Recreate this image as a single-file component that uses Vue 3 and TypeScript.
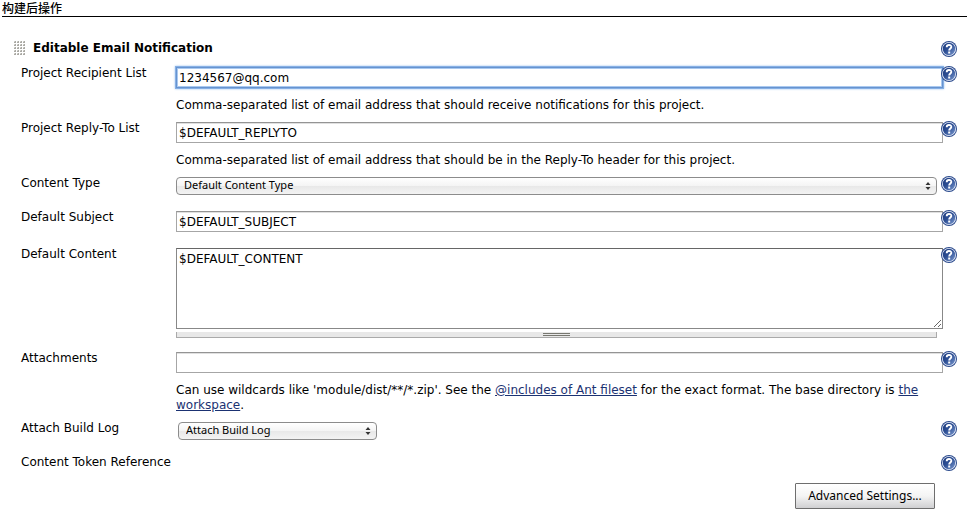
<script setup lang="ts">
import { ref } from 'vue'

const recipients = ref('1234567@qq.com')
const replyTo = ref('$DEFAULT_REPLYTO')
const contentType = ref('default')
const subject = ref('$DEFAULT_SUBJECT')
const content = ref('$DEFAULT_CONTENT')
const attachments = ref('')
const attachLog = ref('attach')
</script>

<template>
  <svg class="sprites" aria-hidden="true">
    <defs>
      <linearGradient id="disc" x1="0" y1="0" x2="1" y2="1">
        <stop offset="0" stop-color="#1d3a7c" />
        <stop offset="0.45" stop-color="#2c4e94" />
        <stop offset="1" stop-color="#7d9bd0" />
      </linearGradient>
    </defs>
    <symbol id="help" viewBox="0 0 16 16">
      <circle cx="8" cy="8" r="8" fill="#2b4a8c" />
      <circle cx="8" cy="8" r="7" fill="#e8eefa" />
      <circle cx="8" cy="8" r="6.2" fill="url(#disc)" />
      <path d="M5.7 6.2C5.7 3.2 10.4 3.3 10.3 5.9C10.2 7.5 8.2 7.6 8.2 9.5" fill="none" stroke="#fff" stroke-width="1.9" />
      <rect x="7.2" y="10.5" width="2" height="2" fill="#fff" />
    </symbol>
    <symbol id="arrows" viewBox="0 0 6 8">
      <path d="M3 0L5.5 3H0.5ZM3 8L0.5 5H5.5Z" fill="#333" />
    </symbol>
    <symbol id="dot" viewBox="0 0 2 2">
      <rect width="2" height="2" fill="#d2d2cc" />
      <path d="M1 0H2V2H0V1H1Z" fill="#aaa9a4" />
    </symbol>
  </svg>

  <form class="config" @submit.prevent>
    <h2 class="section">构建后操作</h2>

    <div class="head">
      <svg class="grip" viewBox="0 0 12 15" shape-rendering="crispEdges" aria-hidden="true">
        <template v-for="r in 5" :key="r">
          <use v-for="c in 4" :key="c" href="#dot" :x="c * 3 - 3" :y="r * 3 - 3" width="2" height="2" />
        </template>
      </svg>
      <h3>Editable Email Notification</h3>
      <button type="button" class="help" aria-label="Help"><svg><use href="#help" /></svg></button>
    </div>

    <div class="row">
      <label for="recipients">Project Recipient List</label>
      <div class="field">
        <input id="recipients" v-model="recipients" class="text active" type="text" />
        <p>Comma-separated list of email address that should receive notifications for this project.</p>
      </div>
      <button type="button" class="help" aria-label="Help"><svg><use href="#help" /></svg></button>
    </div>

    <div class="row">
      <label for="reply">Project Reply-To List</label>
      <div class="field">
        <input id="reply" v-model="replyTo" class="text" type="text" />
        <p>Comma-separated list of email address that should be in the Reply-To header for this project.</p>
      </div>
      <button type="button" class="help" aria-label="Help"><svg><use href="#help" /></svg></button>
    </div>

    <div class="row spaced">
      <label for="type">Content Type</label>
      <div class="field">
        <div class="picker">
          <select id="type" v-model="contentType"><option value="default">Default Content Type</option></select>
          <svg class="arrows"><use href="#arrows" /></svg>
        </div>
      </div>
      <button type="button" class="help" aria-label="Help"><svg><use href="#help" /></svg></button>
    </div>

    <div class="row spaced">
      <label for="subject">Default Subject</label>
      <div class="field">
        <input id="subject" v-model="subject" class="text" type="text" />
      </div>
      <button type="button" class="help" aria-label="Help"><svg><use href="#help" /></svg></button>
    </div>

    <div class="row content-row">
      <label for="content">Default Content</label>
      <div class="field">
        <textarea id="content" v-model="content"></textarea>
        <div class="sizer"><span></span></div>
      </div>
      <button type="button" class="help" aria-label="Help"><svg><use href="#help" /></svg></button>
    </div>

    <div class="row">
      <label for="attachments">Attachments</label>
      <div class="field">
        <input id="attachments" v-model="attachments" class="text" type="text" />
        <p>
          Can use wildcards like 'module/dist/**/*.zip'. See the <a href="#">@includes of Ant fileset</a> for the exact
          format. The base directory is <a href="#">the workspace</a>.
        </p>
      </div>
      <button type="button" class="help" aria-label="Help"><svg><use href="#help" /></svg></button>
    </div>

    <div class="row spaced">
      <label for="log">Attach Build Log</label>
      <div class="field">
        <div class="picker short">
          <select id="log" v-model="attachLog"><option value="attach">Attach Build Log</option></select>
          <svg class="arrows"><use href="#arrows" /></svg>
        </div>
      </div>
      <button type="button" class="help" aria-label="Help"><svg><use href="#help" /></svg></button>
    </div>

    <div class="row token-row">
      <span class="label">Content Token Reference</span>
      <div class="field"></div>
      <button type="button" class="help" aria-label="Help"><svg><use href="#help" /></svg></button>
    </div>

    <div class="actions">
      <button type="button" class="advanced">Advanced Settings...</button>
    </div>
  </form>
</template>

<style>
body {
  background: #fff;
}
</style>

<style scoped>
.sprites {
  position: absolute;
  width: 0;
  height: 0;
}

.config {
  color: #000;
  font: 12px/15px Verdana, "DejaVu Sans", "Noto Sans CJK SC", sans-serif;
}

.section {
  margin: 0 0 24px 2px;
  border-bottom: 1px solid #000;
  font: 500 12px/16px "Noto Sans CJK SC", sans-serif;
}

.head {
  display: flex;
  align-items: flex-start;
  padding: 0 10px 9px 14px;
}

.grip {
  width: 12px;
  height: 15px;
  margin-right: 7px;
}

h3 {
  flex: 1;
  margin: 0;
  font-size: 12px;
  font-weight: bold;
}

.row {
  display: grid;
  grid-template-columns: 155px minmax(0, 1fr) 16px;
  align-items: start;
  padding: 0 10px 8px 21px;
}

.spaced {
  padding-bottom: 15px;
}

.content-row {
  padding-bottom: 13px;
}

.token-row {
  padding-bottom: 12px;
}

.field {
  margin-right: 4px;
  padding-top: 1px;
}

.help {
  position: relative;
  width: 16px;
  height: 16px;
  padding: 0;
  border: 0;
  background: none;
}

.help svg {
  display: block;
  width: 16px;
  height: 16px;
}

.text,
textarea {
  display: block;
  box-sizing: border-box;
  width: calc(100% + 6px);
  margin: 0;
  padding: 2px;
  border: 1px solid #a6a6a6;
  border-radius: 0;
  outline: 0;
  background: #fff;
  color: #000;
  font: inherit;
}

.text {
  height: 21px;
  border-top-color: #949494;
  box-shadow: inset 0 1px #e0e0e0;
}

.active {
  border-color: #6793cf;
  box-shadow: 0 0 0 1px #86b0e5, 0 0 2px 1px #9cc2ef, inset 0 0 0 1px #a9c9f0;
}

textarea {
  height: 81px;
  padding-top: 3px;
  border-color: #666 #888 #888;
  resize: both;
}

p {
  margin: 10px 0 0;
}

a {
  color: #1b3272;
}

.picker {
  position: relative;
}

.short {
  width: 199px;
  margin-left: 2px;
}

select {
  display: block;
  box-sizing: border-box;
  width: 100%;
  height: 18px;
  padding: 0 20px 2px 7px;
  border: 1px solid #8c8c8c;
  border-radius: 4px;
  appearance: none;
  background: linear-gradient(#fff, #f4f4f4 50%, #e8e8e8 50%, #f3f3f3);
  color: #000;
  font: 11px/14px "Lucida Grande", "Noto Sans", sans-serif;
}

.arrows {
  position: absolute;
  top: 5px;
  right: 6px;
  width: 6px;
  height: 8px;
  pointer-events: none;
}

.sizer {
  display: flex;
  justify-content: center;
  box-sizing: border-box;
  height: 6px;
  margin-top: 3px;
  border: 1px solid #aaa;
  border-top: 0;
  background: #e8e8e8;
}

.sizer span {
  box-sizing: border-box;
  width: 27px;
  height: 3px;
  margin-top: 1px;
  border: solid #777770;
  border-width: 1px 0;
}

.actions {
  display: flex;
  justify-content: flex-end;
  padding-right: 32px;
}

.advanced {
  min-width: 140px;
  height: 26px;
  padding: 0 10px;
  border: 1px solid #6e6e6e;
  border-radius: 1px;
  background: linear-gradient(#fff, #f4f4f4 50%, #d0d0d2);
  color: #000;
  font: 12px/20px "Lucida Grande", "Noto Sans", sans-serif;
}
</style>
